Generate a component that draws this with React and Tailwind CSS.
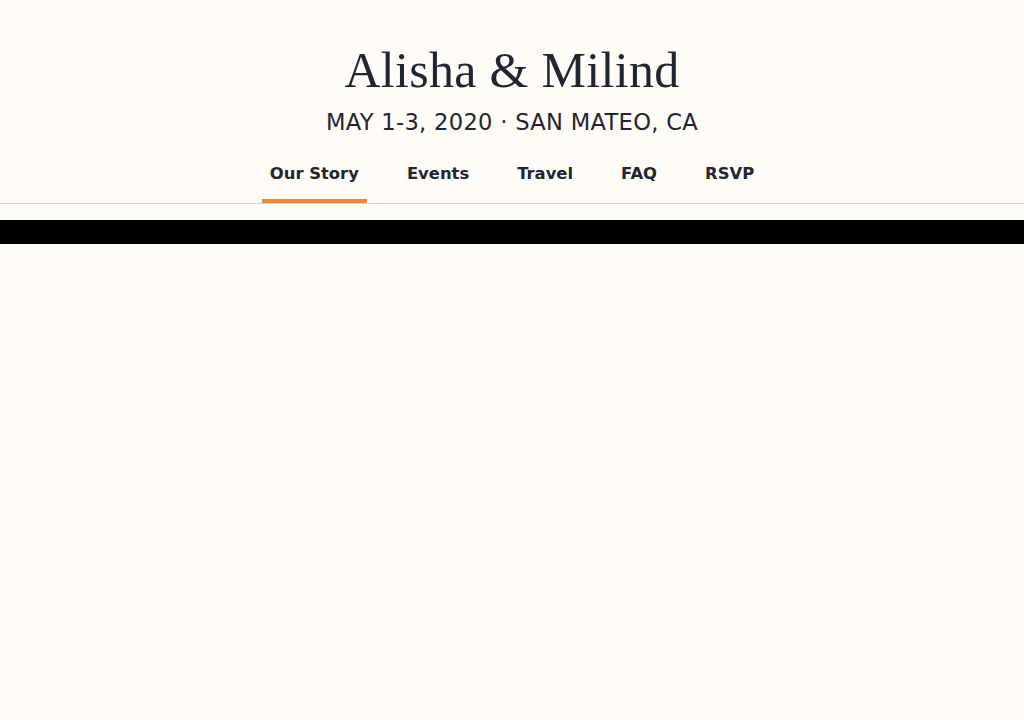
import React from 'react';

const navItems = ['Our Story', 'Events', 'Travel', 'FAQ', 'RSVP'];

const App = () => {
  return (
    <div className="min-h-[720px] bg-[#fffcf7] text-[#1f2533]">
      <header className="pt-[38px] flex flex-col items-center border-b border-[#d1d5db]">
        <h1
          className="text-[50px] leading-[64px] tracking-[0.3px]"
          style={{ fontFamily: '"Liberation Serif", "DejaVu Serif", serif' }}
        >
          Alisha &amp; Milind
        </h1>
        <div
          className="mt-[4px] text-[22.6px] leading-[32px] tracking-[0.3px]"
          style={{ fontFamily: '"DejaVu Sans", "Noto Sans", sans-serif' }}
        >
          MAY 1-3, 2020 · SAN MATEO, CA
        </div>
        {/* Nav */}
        <nav
          className="mt-[14px] flex gap-8"
          style={{ fontFamily: '"DejaVu Sans", "Noto Sans", sans-serif' }}
        >
          {navItems.map((item, i) => (
            <a
              key={item}
              className={`px-2 pt-[10px] pb-[13px] text-[16.4px] leading-[24px] font-semibold border-b-4 ${
                i === 0 ? 'border-[#ed8936]' : 'border-transparent'
              }`}
            >
              {item}
            </a>
          ))}
        </nav>
      </header>
      <div className="mt-4 h-6 bg-black"></div>
    </div>
  );
};

export default App;
